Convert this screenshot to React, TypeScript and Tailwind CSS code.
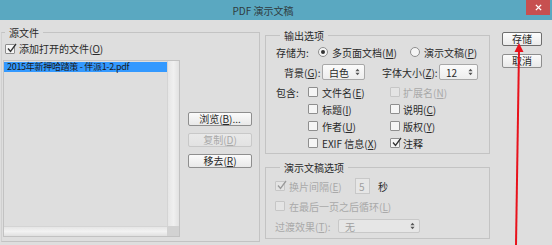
import React from "react";
import clsx from "clsx";

const Key = ({ k, disabled }: { k: string; disabled?: boolean }) => (
  <span className={disabled ? "text-[#a9a9a9]" : ""}>
    (<span className="underline underline-offset-1">{k}</span>)
  </span>
);

const Check = ({ checked, disabled }: { checked?: boolean; disabled?: boolean }) => (
  <span
    className={clsx(
      "relative w-[10px] h-[10px] border rounded-[1px] shrink-0",
      disabled ? "border-[#c6c6c6] bg-[#e4e4e4]" : "border-[#8e8e8e] bg-[#f5f5f5]"
    )}
  >
    {checked && (
      <svg viewBox="0 0 12 12" className="absolute left-[0px] top-[-3px] w-[12px] h-[12px]">
        <path
          d="M2 6.5 L4.5 9.5 L10 2"
          fill="none"
          stroke={disabled ? "#9a9a9a" : "#333"}
          strokeWidth="1.3"
        />
      </svg>
    )}
  </span>
);

const Radio = ({ checked }: { checked?: boolean }) => (
  <span className="w-[10px] h-[10px] rounded-full border border-[#8e8e8e] bg-[#f5f5f5] flex items-center justify-center shrink-0">
    {checked && <span className="w-[4px] h-[4px] rounded-full bg-[#333]" />}
  </span>
);

const UpDown = () => (
  <svg viewBox="0 0 6 9" className="w-[5px] h-[8px]">
    <path d="M0.5 3.5 L3 0.5 L5.5 3.5 Z" fill="#555" />
    <path d="M0.5 5.5 L3 8.5 L5.5 5.5 Z" fill="#555" />
  </svg>
);

const Select = ({ value, className }: { value: string; className: string }) => (
  <div
    className={clsx(
      "border border-[#a8a8a8] rounded-[2px] bg-linear-to-b from-[#fbfbfb] to-[#ededed] flex items-center justify-between pl-[6px] pr-[4px] shrink-0",
      className
    )}
  >
    <span>{value}</span>
    <UpDown />
  </div>
);

const Btn = ({
  children,
  disabled,
  primary,
  className,
}: {
  children: React.ReactNode;
  disabled?: boolean;
  primary?: boolean;
  className?: string;
}) => (
  <div
    className={clsx(
      "flex items-center justify-center rounded-[2px] border bg-linear-to-b leading-none",
      disabled
        ? "border-[#c8c8c8] from-[#e9e9e9] to-[#e2e2e2] text-[#a9a9a9]"
        : primary
        ? "border-[#6e6e6e] from-[#fdfdfd] to-[#ebebeb]"
        : "border-[#8e8e8e] from-[#fbfbfb] to-[#e9e9e9]",
      className
    )}
  >
    {children}
  </div>
);

const Legend = ({ children }: { children: React.ReactNode }) => (
  <legend className="ml-[14px] px-[4px] leading-[13px]">{children}</legend>
);

const includeRows: [string, string[], string[], boolean, boolean][] = [
  ["包含:", ["文件名", "E"], ["扩展名", "N"], false, true],
  ["", ["标题", "I"], ["说明", "C"], false, false],
  ["", ["作者", "U"], ["版权", "Y"], false, false],
  ["", ["EXIF 信息", "X"], ["注释", ""], true, false],
];

export default function App() {
  return (
    <div className="relative w-[552px] h-[245px] overflow-hidden whitespace-nowrap bg-[#dedede] text-[10px] text-[#2a2a2a] font-['Noto_Sans_CJK_SC','Noto_Sans',sans-serif]">
      {/* title bar */}
      <div className="h-[20px] bg-[#5aa8c1] flex items-start">
        <div className="flex-1 h-[20px] flex items-center justify-center text-[10px] text-[#2f3b40] pt-[1px]">
          PDF 演示文稿
        </div>
        <div className="w-[24px] h-[15px] mr-[2px] bg-[#c75050] flex items-center justify-center">
          <svg viewBox="0 0 8 8" className="w-[7px] h-[7px]">
            <path d="M1 1 L7 7 M7 1 L1 7" stroke="#fff" strokeWidth="1.6" />
          </svg>
        </div>
      </div>

      <div className="flex items-start">
        {/* 源文件 */}
        <fieldset className="ml-[1px] mt-[6px] w-[259px] h-[216px] border border-[#c3c3c3] border-l-[#d0d0d0]">
          <legend className="ml-[3px] px-[4px] leading-[13px]">源文件</legend>
          <div className="pl-[1px]">
            <div className="mt-[4px] h-[12px] flex items-center pl-[2px] gap-[4px]">
              <Check checked />
              <span className="leading-none">
                添加打开的文件<Key k="O" />
              </span>
            </div>
            <div className="flex">
              <div className="mt-[5px] w-[177px] h-[177px] border border-[#c2c2c2] flex flex-col">
                <div className="flex flex-1">
                  <div className="flex-1 pt-[1px]">
                    <div className="h-[10px] bg-[#3399ff] text-[#1a1a1a] text-[9px] tracking-[-0.3px] leading-[10px] pl-[3px]">
                      2015年新押哈踏策 - 伴派1-2.pdf
                    </div>
                  </div>
                  <div className="w-[12px] bg-linear-to-r from-[#e6e6e6] via-[#f0f0f0] to-[#e2e2e2] border-l border-[#d4d4d4]" />
                </div>
                <div className="flex h-[10px]">
                  <div className="flex-1 bg-linear-to-b from-[#e6e6e6] via-[#f2f2f2] to-[#e0e0e0] border-t border-[#d4d4d4]" />
                  <div className="w-[12px] bg-[#d2d2d2]" />
                </div>
              </div>
              <div className="ml-[8px] pt-[57px] flex flex-col gap-[7px]">
                <Btn className="w-[64px] h-[14px]">
                  浏览<Key k="B" />...
                </Btn>
                <Btn className="w-[64px] h-[14px]" disabled>
                  复制<Key k="D" disabled />
                </Btn>
                <Btn className="w-[64px] h-[14px]">
                  移去<Key k="R" />
                </Btn>
              </div>
            </div>
          </div>
        </fieldset>

        {/* right column */}
        <div className="ml-[5px] w-[225px] flex flex-col">
          <fieldset className="mt-[9px] h-[125px] border border-[#c3c3c3]">
            <Legend>输出选项</Legend>
            <div className="pl-[10px]">
              <div className="mt-[2px] h-[16px] flex items-center">
                <span className="w-[42px]">存储为:</span>
                <div className="w-[92px] flex items-center gap-[4px]">
                  <Radio checked />
                  <span>
                    多页面文档<Key k="M" />
                  </span>
                </div>
                <div className="flex items-center gap-[4px]">
                  <Radio />
                  <span>
                    演示文稿<Key k="P" />
                  </span>
                </div>
              </div>
              <div className="mt-[4px] h-[16px] flex items-center">
                <span className="w-[46px] pl-[8px]">
                  背景<Key k="G" />:
                </span>
                <Select value="白色" className="w-[43px] h-[16px]" />
                <span className="ml-[17px] w-[57px]">
                  字体大小<Key k="Z" />:
                </span>
                <Select value="12" className="w-[39px] h-[16px]" />
              </div>
              <div className="mt-[5px] flex flex-col gap-[3px]">
                {includeRows.map(([lab, a, b, checkedB, disabledB]) => (
                  <div key={a[0]} className="h-[14px] flex items-center">
                    <span className="w-[32px]">{lab}</span>
                    <div className="w-[82px] flex items-center gap-[4px]">
                      <Check />
                      <span>
                        {a[0]}
                        <Key k={a[1]} />
                      </span>
                    </div>
                    <div className="flex items-center gap-[3px]">
                      <Check checked={checkedB} disabled={disabledB} />
                      <span className={disabledB ? "text-[#a9a9a9]" : ""}>
                        {b[0]}
                        {b[1] && <Key k={b[1]} disabled={disabledB} />}
                      </span>
                    </div>
                  </div>
                ))}
              </div>
            </div>
          </fieldset>

          <fieldset className="mt-[7px] h-[78px] border border-[#c3c3c3]">
            <Legend>演示文稿选项</Legend>
            <div className="pl-[9px]">
              <div className="mt-[4px] h-[16px] flex items-center">
                <Check checked disabled />
                <span className="ml-[4px] w-[62px] text-[#a9a9a9]">
                  换片间隔<Key k="E" disabled />
                </span>
                <div className="ml-[4px] w-[15px] h-[16px] border border-[#c8c8c8] bg-[#e6e6e6] text-[#a0a0a0] flex items-center pl-[3px]">
                  5
                </div>
                <span className="ml-[8px]">秒</span>
              </div>
              <div className="mt-[5px] h-[14px] flex items-center">
                <Check disabled />
                <span className="ml-[4px] text-[#a9a9a9]">
                  在最后一页之后循环<Key k="L" disabled />
                </span>
              </div>
              <div className="mt-[6px] h-[14px] flex items-center">
                <span className="w-[63px] text-[#a9a9a9]">
                  过渡效果<Key k="T" disabled />:
                </span>
                <div className="w-[82px] h-[14px] border border-[#c8c8c8] rounded-[2px] bg-[#e6e6e6] text-[#a0a0a0] flex items-center justify-between pl-[6px] pr-[4px]">
                  <span>无</span>
                  <UpDown />
                </div>
              </div>
            </div>
          </fieldset>
        </div>

        {/* buttons */}
        <div className="ml-[12px] mt-[12px] flex flex-col gap-[8px]">
          <Btn primary className="w-[40px] h-[14px]">
            存储
          </Btn>
          <Btn className="w-[40px] h-[14px]">取消</Btn>
        </div>
      </div>

      {/* red annotation arrow */}
      <svg className="absolute left-[508px] top-[40px] w-[20px] h-[205px]" viewBox="0 0 20 205">
        <path d="M8 205 L11 10" stroke="#e8121b" strokeWidth="2" fill="none" />
        <path d="M11 3 L6.5 12 L15.5 12 Z" fill="#e8121b" />
      </svg>
    </div>
  );
}
